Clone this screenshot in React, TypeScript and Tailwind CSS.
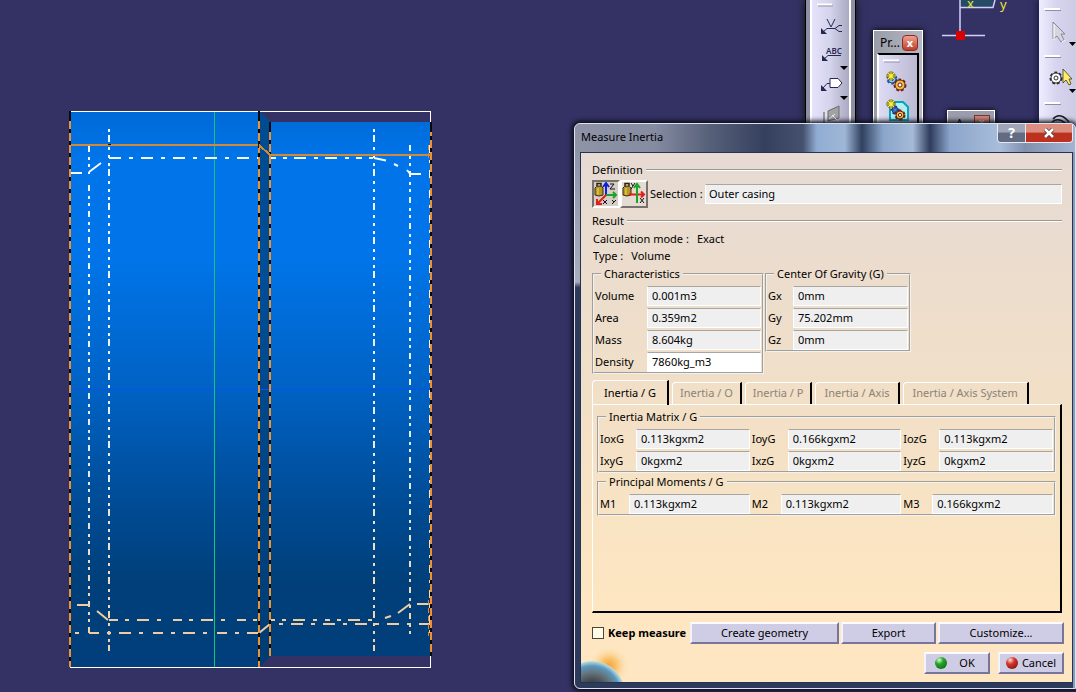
import React, { useState } from "react";

type FieldProps = { id: string; label: string; value: string; editable?: boolean };

function Field({ id, label, value, editable }: FieldProps) {
  return (
    <>
      <label htmlFor={id} className="whitespace-nowrap">
        {label}
      </label>
      <input
        id={id}
        defaultValue={value}
        readOnly={!editable}
        className={
          editable
            ? "h-5 w-full min-w-0 border border-white border-t-[#a9a59f] bg-white px-1 pb-0.5 outline-none"
            : "h-5 w-full min-w-0 border border-white border-t-[#a9a59f] bg-[#efefef] px-1 pb-0.5 outline-none"
        }
      />
    </>
  );
}

function Group({ title, className, children }: { title: string; className?: string; children: React.ReactNode }) {
  return (
    <fieldset className={"min-w-0 border-2 border-[#f4f2ee] px-px [border-style:groove] " + (className ?? "")}>
      <legend className="ml-1.5 px-[3px] leading-4">{title}</legend>
      {children}
    </fieldset>
  );
}

function Section({ title }: { title: string }) {
  return (
    <div className="mr-0.5 flex h-[18px] items-center gap-[3px]">
      <h2>{title}</h2>
      <div className="h-0.5 flex-1 border-b border-t border-b-white border-t-[#9b9792]" />
    </div>
  );
}

const raised =
  "flex items-center justify-center border-2 border-b-[#77759a] border-l-[#f3f2ff] border-r-[#77759a] border-t-[#fbfaff] bg-[#cfcde6]";

function Model() {
  const edge = (x: number, y1: number, y2: number, offset: number) => (
    <g key={x} strokeWidth="2">
      <line x1={x} x2={x} y1={y1} y2={y2} stroke="#080808" />
      <line x1={x} x2={x} y1={y1 + 10} y2={y2} stroke="#ea9234" strokeDasharray="8 4" strokeDashoffset={offset} />
    </g>
  );
  return (
    <svg className="absolute left-0 top-0" width="450" height="692" viewBox="0 0 450 692" shapeRendering="crispEdges" aria-hidden="true">
      <defs>
        <linearGradient id="body" gradientUnits="userSpaceOnUse" x1="0" x2="0" y1="111" y2="667">
          <stop offset="0" stopColor="#0069d6" />
          <stop offset="0.08" stopColor="#0074e8" />
          <stop offset="0.27" stopColor="#0074e8" />
          <stop offset="0.5" stopColor="#0062c4" />
          <stop offset="0.7" stopColor="#004c96" />
          <stop offset="0.85" stopColor="#003f79" />
          <stop offset="1" stopColor="#003f7b" />
        </linearGradient>
        <linearGradient id="groove" gradientUnits="userSpaceOnUse" x1="0" x2="0" y1="111" y2="667">
          <stop offset="0" stopColor="#004b90" />
          <stop offset="0.3" stopColor="#004e98" />
          <stop offset="1" stopColor="#003c73" />
        </linearGradient>
        <linearGradient id="hidden" gradientUnits="userSpaceOnUse" x1="0" x2="0" y1="111" y2="667">
          <stop offset="0" stopColor="#f2fcff" />
          <stop offset="0.6" stopColor="#e6edf2" />
          <stop offset="1" stopColor="#f3cfa0" />
        </linearGradient>
      </defs>
      <rect x="70" y="111" width="189" height="556" fill="url(#body)" />
      <path d="M259 111 L270 122 V656 L259 667Z" fill="url(#groove)" />
      <rect x="270" y="122" width="161" height="534" fill="url(#body)" />
      <path d="M70 111.5H431M430.500 111V122M430.500 656V668M70 667.500H431" stroke="#fff" fill="none" />
      <rect x="71" y="389" width="360" height="1" fill="#0a50ee" />
      <rect x="214" y="112" width="1" height="555" fill="#12c878" />
      <g stroke="url(#hidden)" strokeWidth="2" fill="none">
        <path d="M89 146V173.500M89 185V634" strokeDasharray="6 5 3 4 3 5" />
        <path d="M109 129V651" strokeDasharray="3 3 7 5 3 5 3 5" />
        <path d="M374 129V651" strokeDasharray="3 3 7 5 3 5 3 5" />
        <path d="M410 145V634" strokeDasharray="6 5 3 4 3 5" />
        <path d="M429 145V180M429 190V634" strokeDasharray="8 7 3 7" strokeWidth="1" />
      </g>
      <g stroke="#f2fcff" strokeWidth="2" fill="none">
        <path d="M109 158H258" strokeDasharray="12 8 4 8" />
        <path d="M270 158H375" strokeDasharray="6 7 4 7 12 8 4 7 12 8 4 7" />
        <path d="M71 173H82M410 174H421" />
        <path d="M89 172L101 163M374 158L386 160.500M394 164L398 166M407 170L411 175" shapeRendering="auto" strokeWidth="2" />
      </g>
      <g stroke="#f0cca0" strokeWidth="2" fill="none">
        <path d="M109 620H258" strokeDasharray="9 7 4 8 12 8 4 12" />
        <path d="M75 633H259" strokeDasharray="4 10 10 8 4 8 12 8" />
        <path d="M270 620H378" strokeDasharray="5 7 4 7 12 8 4 8" />
        <path d="M279 624H431" strokeDasharray="4 8 12 8" />
        <path d="M77 605H89M417 604H431" />
        <path d="M97 611L108 620M259 633L270 624M385 618L391 616M398 613L410 604" shapeRendering="auto" strokeWidth="2" />
        <circle cx="109" cy="633" r="1.500" strokeWidth="1" shapeRendering="auto" />
      </g>
      {edge(70, 111, 667, 0)}
      {edge(259, 111, 667, 0)}
      {edge(270, 122, 656, 0)}
      {edge(431, 122, 656, 4)}
      <path d="M71 145H259L270 155H430" fill="none" stroke="#d08a3c" strokeWidth="2" />
      <path d="M258 142v6M108 144h3" stroke="#111" fill="none" />
      <path d="M428 145v13M428 600v36" stroke="#ff7b20" strokeWidth="1" strokeDasharray="5 3" />
    </svg>
  );
}

function AxisMark() {
  return (
    <svg className="absolute left-[940px] top-0" width="76" height="44" viewBox="0 0 76 44" aria-hidden="true">
      <path d="M21 0H54L52 7H21Z" fill="#254b67" />
      <path d="M20 0V33M20 7.500H53L55 0" stroke="#d6cdf8" strokeWidth="1.500" fill="none" />
      <path d="M2 35.500H45" stroke="#d6cdf8" strokeWidth="1.500" />
      <rect x="16" y="31" width="9" height="9" fill="#d80000" />
      <g fill="#e8e838" fontFamily="Noto Sans, sans-serif" fontSize="13">
        <text x="27" y="8">x</text>
        <text x="60" y="9">y</text>
      </g>
    </svg>
  );
}

function Gear({ x, y, r, fill, stroke }: { x: number; y: number; r: number; fill: string; stroke: string }) {
  return (
    <g>
      <circle cx={x} cy={y} r={r} fill={fill} stroke={stroke} strokeWidth="3" strokeDasharray="2.500 1.800" />
      <circle cx={x} cy={y} r={r} fill={fill} stroke={stroke} strokeWidth="1" />
      <circle cx={x} cy={y} r={r / 2.5} fill="#fff" stroke={stroke} />
    </g>
  );
}

function AnnotationBar() {
  return (
    <div className="absolute left-[805px] top-0 h-44 w-[51px] border-x border-black bg-[#8e8fa3] px-1 shadow-[0_0_8px_#111]">
      <div className="h-full border-x-2 border-x-white bg-linear-to-r from-[#e4e3fa] via-[#d4d3ec] to-[#aaa9c2]">
        <svg width="38" height="124" viewBox="0 0 38 124" fill="none" stroke="#292752" aria-hidden="true">
          <path d="M5 4.500H20" stroke="#fff" strokeWidth="2" />
          <path d="M6 6H21" stroke="#9896ad" />
          <path d="M15 19L19 27L23 19M15 28.500H23L27 25.500H30M23 28.500L27 31.500H30M15 28.500L11 32" />
          <path d="M9 28V34H15Z" fill="#292752" stroke="none" />
          <path d="M11 60L16 55.500H29" />
          <path d="M10 55V61H16Z" fill="#292752" stroke="none" />
          <text x="14" y="54" fill="#292752" stroke="none" fontSize="8" fontWeight="600" fontFamily="Noto Sans, sans-serif">
            ABC
          </text>
          <path d="M18 78.500H26L30 83L26 87.500H18Z" fill="#fff" />
          <path d="M18 83.500H15L11 88" />
          <path d="M9 85V91H15Z" fill="#292752" stroke="none" />
          <path d="M28 66H36L32 70ZM28 96H36L32 100Z" fill="#000" stroke="none" />
          <path d="M16 111L27 106V118L16 121Z" fill="#a2a2a2" stroke="#6c6c6c" />
          <path d="M14 111V124M17 119L23 114M20 115L27 122" stroke="#eee" />
          <path d="M12 112V124" stroke="#555" />
        </svg>
      </div>
    </div>
  );
}

function ProductWindow() {
  return (
    <section className="absolute left-[873px] top-[30px] h-32 w-[50px] border border-white bg-linear-to-r from-[#989da8] to-[#b7b7c2] px-[3px] py-0.5 shadow-[0_0_6px_#000]">
      <header className="flex h-5 items-center justify-between pl-[3px] pr-px text-xs">
        <span>Pr...</span>
        <button aria-label="Close product tools" className="flex size-4 items-center justify-center rounded-sm border border-[#8f2c20] bg-linear-to-b from-[#eda092] to-[#bb3d26] pb-0.5 text-[11px] font-bold leading-none text-white">
          x
        </button>
      </header>
      <div className="h-24 border-2 border-black border-l-white border-t-black bg-linear-to-r from-[#dedcf5] to-[#bcbad3]">
        <svg width="38" height="70" viewBox="0 0 38 70" aria-hidden="true">
          <path d="M4 5.500H20" stroke="#fff" strokeWidth="2" />
          <path d="M5 7H21" stroke="#9997b2" />
          <Gear x={13} y={24} r={4} fill="#8cc4f4" stroke="#1851a5" />
          <Gear x={21} y={30} r={5} fill="#f2bb45" stroke="#6a2410" />
          <path d="M12 16V26M7 21H17M9 18L15 24M15 18L9 24" stroke="#5a5410" strokeWidth="2.500" />
          <path d="M12 16V26M7 21H17M9 18L15 24M15 18L9 24" stroke="#f9f04c" strokeWidth="1.200" />
          <path d="M11 47H24L29 52V65H11Z" fill="#b4eef5" stroke="#00a8ba" strokeWidth="2" />
          <Gear x={16} y={55} r={3} fill="#3376cf" stroke="#123b9b" />
          <Gear x={21} y={60} r={4} fill="#f2bb45" stroke="#6a2410" />
          <path d="M12 44V54M7 49H17M9 46L15 52M15 46L9 52" stroke="#5a5410" strokeWidth="2.500" />
          <path d="M12 44V54M7 49H17M9 46L15 52M15 46L9 52" stroke="#f9f04c" strokeWidth="1.200" />
        </svg>
      </div>
    </section>
  );
}

function SideBar() {
  return (
    <div className="absolute right-0 top-0 h-44 w-[37px] bg-linear-to-r from-[#eeedff] via-[#d5d3ed] to-[#cecce5] pl-1 shadow-[-2px_0_6px_#1c1b3e]">
      <svg width="33" height="124" viewBox="0 0 33 124" aria-hidden="true">
        <path d="M1 9H17M1 56H17M1 103H17" stroke="#fff" strokeWidth="2" />
        <path d="M2 10.500H18M2 57.500H18M2 104.500H18" stroke="#8f8da7" />
        <path d="M10 22V39L14 36L18 42L21 40L18 34H22Z" fill="#d5d4df" stroke="#888799" />
        <path d="M11 24V40M19 42L22 40" stroke="#fff" />
        <path d="M26 42H33L29.500 46ZM26 89H33L29.500 93Z" fill="#000" />
        <Gear x={13} y={78} r={5} fill="#fff" stroke="#29292f" />
        <path d="M20 69V83L23 80L26 85L28 84L26 79H29Z" fill="#ffed67" stroke="#29220b" strokeWidth="0.700" />
        <path d="M10 119C15 113 21 116 26 122M9 122C14 118 19 120 23 124" fill="none" stroke="#1c1c1c" strokeWidth="1.500" />
      </svg>
    </div>
  );
}

function AnalysisWindow() {
  return (
    <section className="absolute left-[947px] top-[110px] flex h-10 w-12 justify-between border border-white bg-[#9c9dac] px-2 pr-1 pt-1 text-[11px] shadow-[0_0_5px_#000]">
      <span>A...</span>
      <span className="size-4 border border-[#78372b] bg-[#d08475] text-center text-[10px] leading-3 text-white">x</span>
    </section>
  );
}

function Weight() {
  return (
    <>
      <path d="M1 6Q2 4 5 4Q8 4 9 6V13Q5 15 1 13Z" fill="#b89824" stroke="#38300a" />
      <path d="M3 4V1.500H7V4" stroke="#292407" fill="none" strokeWidth="1.500" />
      <path d="M4 6V13" stroke="#f0dc6d" />
    </>
  );
}

function InertiaIcon() {
  return (
    <svg width="24" height="24" viewBox="0 0 24 24" fill="none" aria-hidden="true">
      <Weight />
      <path d="M12 14V2M9 5L12 1L15 5" stroke="#0a22e0" strokeWidth="2" />
      <path d="M12 13H22M19 10L22 13L19 16" stroke="#18a52b" strokeWidth="2" />
      <path d="M12 13L4 21M3 17V22H8" stroke="#e21d18" strokeWidth="2" />
      <path d="M16 2H20L16 7H21M9 18L13 22M13 18L9 22M18 18L20 20L22 18M20 20L18 22" stroke="#111" />
    </svg>
  );
}

function AxisIcon() {
  return (
    <svg width="24" height="24" viewBox="0 0 24 24" fill="none" aria-hidden="true">
      <Weight />
      <path d="M7 12.500H22M19 9.500L22 12.500L19 15.500" stroke="#e21d18" strokeWidth="2" />
      <path d="M15 21V4M12 6L15 2L18 6" stroke="#18a52b" strokeWidth="2" />
      <path d="M9 1L11 4L13 1M11 4L9 7M18 16L22 21M22 16L18 21" stroke="#111" />
    </svg>
  );
}

function Planet() {
  return (
    <svg className="pointer-events-none absolute bottom-0 left-0" width="56" height="38" viewBox="0 0 56 38" aria-hidden="true">
      <defs>
        <radialGradient id="glow" gradientUnits="userSpaceOnUse" cx="28" cy="22" r="20">
          <stop offset="0" stopColor="#f7a233" />
          <stop offset="0.4" stopColor="#fac471" />
          <stop offset="1" stopColor="#fde5c0" stopOpacity="0" />
        </radialGradient>
        <radialGradient id="planet" gradientUnits="userSpaceOnUse" cx="11" cy="50" r="33">
          <stop offset="0.3" stopColor="#36363a" />
          <stop offset="0.65" stopColor="#65747c" />
          <stop offset="0.85" stopColor="#5a98bd" />
          <stop offset="1" stopColor="#c5e0e2" />
        </radialGradient>
      </defs>
      <rect width="56" height="38" fill="url(#glow)" />
      <circle cx="11" cy="50" r="33" fill="url(#planet)" />
    </svg>
  );
}

const tabs = ["Inertia / G", "Inertia / O", "Inertia / P", "Inertia / Axis", "Inertia / Axis System"];

function MeasureDialog() {
  const [keep, setKeep] = useState(false);
  return (
    <section
      role="dialog"
      aria-labelledby="dialog-title"
      className="absolute left-[574px] right-0 top-[123px] rounded-t-md rounded-bl-md border border-[#dce2ee] bg-linear-to-b from-[#8b91a6] from-0% via-[#a8adbd] via-28% to-[#2e3a5b] to-29% pb-[5px] pl-[5px] pr-0.5 shadow-[0_0_5px_2px_#080914]"
    >
      <div className="absolute inset-x-0 top-0 h-7 rounded-t-md bg-[linear-gradient(90deg,#8e93a6_0px,#858ba1_80px,#566079_135px,#35405f_190px,#46516f_228px,#91add3_242px,#9fb6d6_270px,#30405f_287px,#8aa5ca_308px,#a5bad6_338px,#2e3b5c_355px,#8ca5ca_375px,#a8bddb_425px,#8290ad_450px,#a3b4d3_500px)]" />
      <div className="absolute bottom-0 right-0 top-7 w-0.5 bg-[#879bbd]" />
      <header className="relative flex h-7 items-start justify-between">
        <h1 id="dialog-title" className="pl-px leading-[25px]">
          Measure Inertia
        </h1>
        <div className="flex h-[19px] overflow-hidden rounded-b border border-t-0 border-[#e6e9f1] text-white">
          <button aria-label="Help" className="w-7 border-r border-[#e6e9f1] bg-linear-to-b from-[#a0a6b7] from-45% to-[#626b82] to-50% text-sm font-bold leading-4">
            ?
          </button>
          <button aria-label="Close" className="flex w-[46px] items-center justify-center bg-linear-to-b from-[#dc8e81] from-45% to-[#bd321f] to-50%">
            <svg width="12" height="10" viewBox="0 0 12 10" aria-hidden="true">
              <path d="M2 1L10 9M10 1L2 9" stroke="#553132" strokeWidth="4" />
              <path d="M2 1L10 9M10 1L2 9" stroke="#fff" strokeWidth="2.500" />
            </svg>
          </button>
        </div>
      </header>
      <div className="relative border border-[#223452] bg-linear-to-b from-[#e6dad3] via-[#f1dfc7] via-45% to-[#fde6c1] to-85% pb-2 pl-[11px] pr-2 pt-2">
        <Planet />
        <Section title="Definition" />
        <div className="mt-px flex items-center">
          <button aria-label="Measure inertia" aria-pressed="true" className="flex size-7 items-center justify-center border-2 border-white border-l-[#77726d] border-t-[#77726d] bg-[#d8cdc6]">
            <InertiaIcon />
          </button>
          <button aria-label="Measure inertia 2D" className="flex size-7 items-center justify-center border-2 border-white border-b-[#77726d] border-r-[#77726d] bg-[#e6dbd3]">
            <AxisIcon />
          </button>
          <label htmlFor="selection" className="w-[57px] whitespace-nowrap pl-0.5">
            Selection :
          </label>
          <input id="selection" readOnly defaultValue="Outer casing" className="mr-0.5 h-5 min-w-0 flex-1 border border-white border-t-[#a9a59f] bg-[#efefef] px-[3px] pb-0.5 outline-none" />
        </div>
        <div className="mt-1">
          <Section title="Result" />
        </div>
        <p className="flex gap-2 pl-px leading-[17px]">
          <span>Calculation mode :</span>
          <span>Exact</span>
        </p>
        <p className="flex gap-2 pl-px leading-[17px]">
          <span>Type :</span>
          <span>Volume</span>
        </p>
        <div className="flex items-start gap-px pt-0.5">
          <Group title="Characteristics" className="w-[172px]">
            <div className="grid grid-cols-[52px_1fr] items-center gap-y-0.5 pt-1">
              <Field id="volume" label="Volume" value="0.001m3" />
              <Field id="area" label="Area" value="0.359m2" />
              <Field id="mass" label="Mass" value="8.604kg" />
              <Field id="density" label="Density" value="7860kg_m3" editable />
            </div>
          </Group>
          <Group title="Center Of Gravity (G)" className="w-[146px]">
            <div className="grid grid-cols-[25px_1fr] items-center gap-y-0.5 pt-1">
              <Field id="gx" label="Gx" value="0mm" />
              <Field id="gy" label="Gy" value="75.202mm" />
              <Field id="gz" label="Gz" value="0mm" />
            </div>
          </Group>
        </div>
        <div role="tablist" className="mt-1.5 flex h-6 items-end">
          {tabs.map((name, i) => (
            <button
              key={name}
              role="tab"
              aria-selected={i === 0}
              disabled={i !== 0}
              className={
                i === 0
                  ? "-mb-px h-[25px] rounded-tl border-l border-r-2 border-t border-l-white border-r-black border-t-white px-[11px]"
                  : "ml-[3px] h-[22px] rounded-tl border-l border-r-2 border-t border-l-white border-r-black border-t-white px-[7px] text-[#8b8378] nth-[4]:px-2 last:px-[9px]"
              }
            >
              {name}
            </button>
          ))}
        </div>
        <div role="tabpanel" className="mr-0.5 min-h-[209px] border-b-2 border-l border-r-2 border-t border-b-black border-l-white border-r-black border-t-white px-1 pt-1">
          <Group title="Inertia Matrix / G">
            <div className="grid grid-cols-[34px_1fr_34px_1fr_34px_1fr] items-center gap-x-0.5 gap-y-0.5 pt-1">
              <Field id="ioxg" label="IoxG" value="0.113kgxm2" />
              <Field id="ioyg" label="IoyG" value="0.166kgxm2" />
              <Field id="iozg" label="IozG" value="0.113kgxm2" />
              <Field id="ixyg" label="IxyG" value="0kgxm2" />
              <Field id="ixzg" label="IxzG" value="0kgxm2" />
              <Field id="iyzg" label="IyzG" value="0kgxm2" />
            </div>
          </Group>
          <Group title="Principal Moments / G" className="mt-px">
            <div className="grid grid-cols-[27px_1fr_27px_1fr_27px_1fr] items-center gap-x-0.5 pt-1">
              <Field id="m1" label="M1" value="0.113kgxm2" />
              <Field id="m2" label="M2" value="0.113kgxm2" />
              <Field id="m3" label="M3" value="0.166kgxm2" />
            </div>
          </Group>
        </div>
        <div className="mt-[9px] flex items-center gap-0.5">
          <label className="flex w-24 items-center gap-1 whitespace-nowrap text-[11px] font-bold">
            <input
              type="checkbox"
              checked={keep}
              onChange={(e) => setKeep(e.target.checked)}
              className="size-3 appearance-none border border-[#4b4638] bg-[#fffde8] checked:bg-[#4b4638]"
            />
            Keep measure
          </label>
          <button className={raised + " h-[22px] flex-[150]"}>Create geometry</button>
          <button className={raised + " h-[22px] flex-[94]"}>Export</button>
          <button className={raised + " h-[22px] flex-[126]"}>Customize...</button>
        </div>
        <div className="mt-2 flex justify-end gap-2">
          <button className={raised + " h-[22px] w-[66px] gap-3 pr-1"}>
            <span className="size-3 rounded-full bg-[radial-gradient(circle_at_35%_25%,#d9ffd0,#25a52b_35%,#075a0b)]" />
            OK
          </button>
          <button className={raised + " h-[22px] w-[66px] gap-1"}>
            <span className="size-3 rounded-full bg-[radial-gradient(circle_at_35%_25%,#ffe0d9,#d53629_35%,#6d0905)]" />
            Cancel
          </button>
        </div>
      </div>
    </section>
  );
}

export default function App() {
  return (
    <main className="relative min-h-screen overflow-hidden bg-[#343264] font-['Noto_Sans','Open_Sans',sans-serif] text-[11px] text-black">
      <Model />
      <AxisMark />
      <AnnotationBar />
      <ProductWindow />
      <AnalysisWindow />
      <SideBar />
      <MeasureDialog />
    </main>
  );
}
